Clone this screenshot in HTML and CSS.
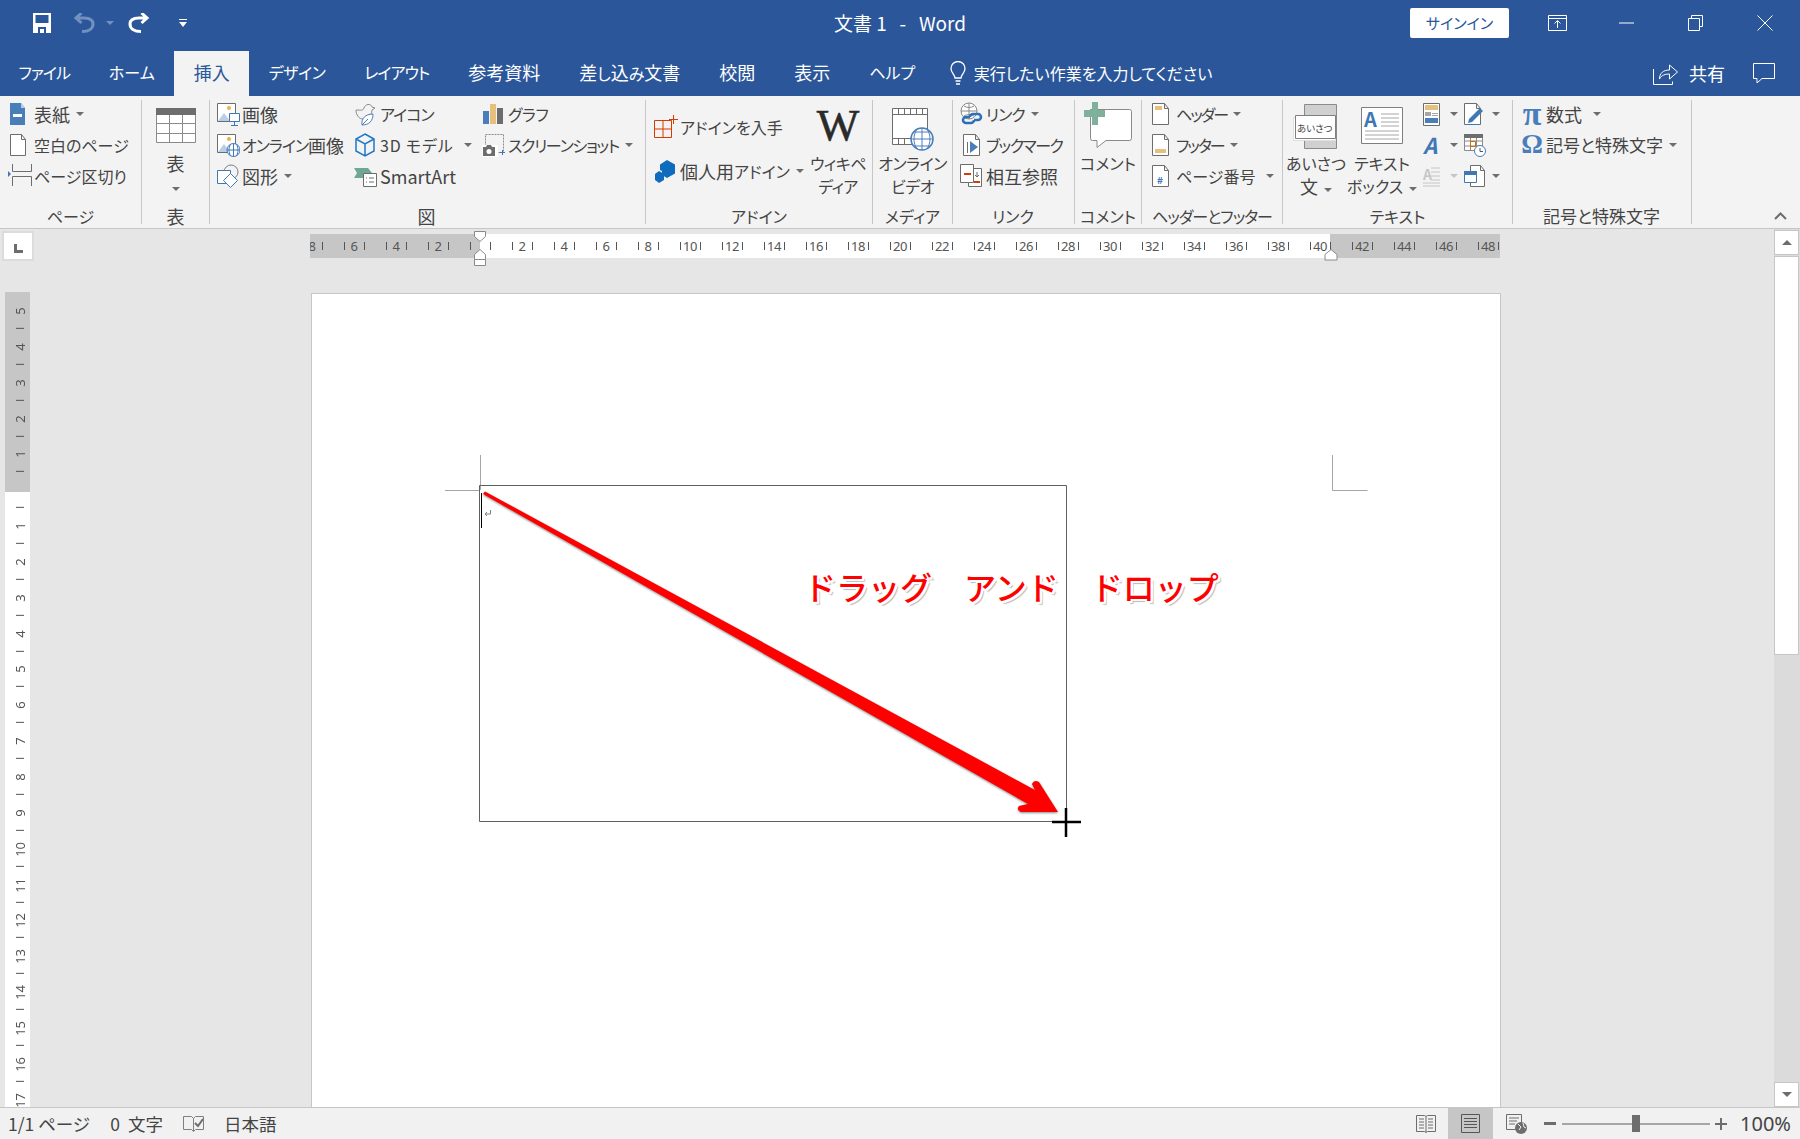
FILE: index.html
```html
<!DOCTYPE html>
<html lang="ja">
<head>
	<meta charset="UTF-8">
	<title>文書 1 - Word</title>
	<link rel="stylesheet" href="styles.css">
</head>
<body>
	<!-- title bar -->
	<header class="titlebar">
		<div class="qat">
			<svg class="q-save" width="20" height="20" viewBox="0 0 20 20"><path fill="#fff" fill-rule="evenodd" d="M1 0h18v20H1zM3.500 2v8h13V2zM6 14v6h2v-4h4v4h2v-6z"/></svg>
			<svg class="q-undo" width="22" height="20" viewBox="0 0 22 20"><path fill="none" stroke="#7390c0" stroke-width="3" d="M9 18.500c7 0 11-3 11-7.500s-4-6-9-6H3M8.500 0 3 5l5.500 5"/></svg>
			<svg class="q-caret" width="8" height="4" viewBox="0 0 8 4"><path fill="#7390c0" d="M0 0h8L4 4z"/></svg>
			<svg class="q-redo" width="22" height="20" viewBox="0 0 22 20"><path fill="none" stroke="#fff" stroke-width="3" d="M13 18.500c-7 0-11-3-11-7.500s4-6 9-6h8M13.500 0 19 5l-5.500 5"/></svg>
			<svg class="q-more" width="8" height="8" viewBox="0 0 8 8"><path fill="#fff" d="M0 0h8v1H0zM0 3h8L4 8z"/></svg>
		</div>
		<div class="doc-title">文書 1 &nbsp;&nbsp;-&nbsp;&nbsp; Word</div>
		<div class="win">
			<a class="signin">サインイン</a>
			<span class="win-btn"><svg width="20" height="16" viewBox="0 0 20 16"><path fill="none" stroke="#fff" d="M.5.500h18v15H.5zM.5 3.500h18M9.500 13V6M6.500 8.500l3-3 3 3"/></svg></span>
			<span class="win-btn"><svg width="16" height="2" viewBox="0 0 16 2"><path stroke="#fff" d="M0 1h15"/></svg></span>
			<span class="win-btn"><svg width="16" height="16" viewBox="0 0 16 16"><path fill="none" stroke="#fff" d="M.5 3.500h11v12H.5zM3.500 3.500v-3h11v11h-3"/></svg></span>
			<span class="win-btn"><svg width="16" height="16" viewBox="0 0 16 16"><path fill="none" stroke="#fff" d="M.5.500l15 15M15.500.500l-15 15"/></svg></span>
		</div>
	</header>

	<!-- tabs -->
	<nav class="tabs">
		<a class="tab tab-first">ファイル</a>
		<a class="tab">ホーム</a>
		<a class="tab on"><span class="kj">挿入</span></a>
		<a class="tab ls05">デザイン</a>
		<a class="tab ls1">レイアウト</a>
		<a class="tab"><span class="kj">参考資料</span></a>
		<a class="tab"><span class="kj">差</span>し<span class="kj">込</span>み<span class="kj">文書</span></a>
		<a class="tab"><span class="kj">校閲</span></a>
		<a class="tab"><span class="kj">表示</span></a>
		<a class="tab">ヘルプ</a>
		<div class="tell">
			<svg width="18" height="25" viewBox="0 0 18 25"><path fill="none" stroke="#fff" stroke-width="1.300" d="M6 17c0-3-4-5-4-9.500a7 7 0 0 1 14 0C16 12 12 14 12 17zM6.500 20h5M7 23h4"/></svg>
			<span>実行したい作業を入力してください</span>
		</div>
		<div class="tab-right">
			<svg width="26" height="22" viewBox="0 0 26 22"><path fill="none" stroke="#fff" d="M.5 6v15.500h19v-3M6.500 16c0-6 4-9 10-9V2l8 7-8 7v-5c-4 0-8 1-10 5z"/></svg>
			<span class="share kj">共有</span>
			<svg class="talk" width="24" height="21" viewBox="0 0 24 21"><path fill="none" stroke="#fff" d="M1.500.500h21v15H10l-5 4.500v-4.500H1.500z"/></svg>
		</div>
	</nav>

	<!-- ribbon -->
	<section class="ribbon">
		<div class="group g-page">
			<div class="col">
				<a class="btn"><svg width="24" height="24" viewBox="0 0 24 24"><path fill="#4a7ebb" d="M2 1h11l4 5v17H2z"/><path fill="#b9cfe8" d="M13 1v5h4z"/><path fill="#fff" d="M5 12h9v3H5z"/></svg><span class="kj">表紙</span><i class="caret"></i></a>
				<a class="btn"><svg width="24" height="24" viewBox="0 0 24 24"><path fill="#fff" stroke="#6d6d6d" d="M2.500 1.500h11l4 5v16h-15zM13.500 1.500v5h4"/></svg>空白のページ</a>
				<a class="btn"><svg width="24" height="24" viewBox="0 0 24 24"><path fill="none" stroke="#6d6d6d" d="M4.500 0v7.500h19V0M4.500 22v-9.500h19V22"/><path fill="#3f78b5" d="M0 7l3 3-3 3z"/></svg>ページ区切り</a>
			</div>
			<div class="g-label">ページ</div>
		</div>

		<div class="group g-table">
			<a class="big">
				<svg width="42" height="52" viewBox="0 0 42 52"><path fill="#fff" stroke="#8a8a8a" d="M1.500 8.500h39v34h-39zM1.500 23.500h39M1.500 33.500h39M14.500 15v27M27.500 15v27"/><path fill="#6d6d6d" d="M1 8h40v7H1z"/></svg>
				<span class="kj">表</span>
				<span><i class="caret flush"></i></span>
			</a>
			<div class="g-label kj">表</div>
		</div>

		<div class="group g-fig">
			<div class="cols">
				<div class="col col-fig1">
					<a class="btn"><svg width="24" height="24" viewBox="0 0 24 24"><path fill="#fff" stroke="#6d6d6d" d="M1.500 1.500h18v18h-18z"/><path fill="#b9cfe8" d="M2 19l6-8 6 8z"/><circle cx="13" cy="6" r="2" fill="#e8b04f"/><path fill="#fff" stroke="#3f78b5" d="M13.500 11.500h10v8h-10zM18.500 20v3M15 23.500h7"/></svg><span class="kj">画像</span></a>
					<a class="btn ls1"><svg width="24" height="24" viewBox="0 0 24 24"><path fill="#fff" stroke="#6d6d6d" d="M1.500 1.500h18v18h-18z"/><path fill="#b9cfe8" d="M2 19l6-8 6 8z"/><circle cx="13" cy="6" r="2" fill="#e8b04f"/><circle cx="17.500" cy="17" r="6.500" fill="#fff" stroke="#3f78b5"/><path fill="none" stroke="#3f78b5" d="M11 17h13M17.500 10.500v13M14.500 11.500c-2 3-2 8 0 11M20.500 11.500c2 3 2 8 0 11"/></svg>オンライン<span class="kj">画像</span></a>
					<a class="btn"><svg width="24" height="24" viewBox="0 0 24 24"><circle cx="15" cy="8" r="7" fill="none" stroke="#7f7f7f"/><path fill="#fff" stroke="#3f78b5" d="M1.500 6.500h13v13h-13z"/><path fill="#fff" stroke="#3f78b5" d="M14.500 9.500l7 7-7 7-7-7z"/></svg><span class="kj">図形</span><i class="caret"></i></a>
				</div>
				<div class="col col-fig2">
					<a class="btn ls1"><svg width="24" height="24" viewBox="0 0 24 24"><path fill="none" stroke="#8a8a8a" d="M2 8c5 0 7 1 8-2 1-4 7-5 8-1l3 1-3 2c0 4-2 6-4 7M2 8c0 5 3 9 7 9"/><path fill="#fff" stroke="#4a7ebb" d="M8 23c-1-6 3-11 11-11 0 7-4 11-11 11zM8 23l6-6"/></svg>アイコン</a>
					<a class="btn lsp"><svg width="24" height="24" viewBox="0 0 24 24"><path fill="none" stroke="#1f78c8" stroke-width="1.500" d="M11 1l9 5v12l-9 5-9-5V6zM2 6l9 5 9-5M11 11v12"/></svg>3D モデル<i class="caret wide"></i></a>
					<a class="btn"><svg width="24" height="24" viewBox="0 0 24 24"><path fill="#6ea792" d="M0 4h14l4 5-4 5H0l3-5z"/><path fill="#fff" stroke="#6d6d6d" d="M9.500 9.500h13v13h-13zM12 14h1M15 14h5M12 18h1M15 18h5"/></svg><span class="kj">SmartArt</span></a>
				</div>
				<div class="col col-fig3">
					<a class="btn ls05"><svg width="24" height="24" viewBox="0 0 24 24"><path fill="#4a7ebb" d="M1 9h6v13H1z"/><path fill="#e8c07d" d="M8 2h6v20H8z"/><path fill="#6d6d6d" d="M15 6h6v16h-6z"/></svg>グラフ</a>
					<a class="btn ls13"><svg width="24" height="24" viewBox="0 0 24 24"><path fill="none" stroke="#8a8a8a" stroke-dasharray="2 1" d="M3.500 1.500h18v18h-18z"/><path fill="#fff" d="M0 12h16v12H0z"/><path fill="#6d6d6d" d="M1 14h3l1-2h4l1 2h3v9H1z"/><circle cx="7" cy="18.500" r="2.500" fill="#fff"/><path fill="#3f78b5" d="M18 19h2v-2h1v2h2v1h-2v2h-1v-2h-2z"/></svg>スクリーンショット<i class="caret"></i></a>
				</div>
			</div>
			<div class="g-label kj">図</div>
		</div>

		<div class="group g-addin">
			<div class="cols">
				<div class="col col-addin">
					<a class="btn tall"><svg width="24" height="24" viewBox="0 0 24 24"><path fill="none" stroke="#d83b01" d="M.5 5.500h17v17H.5zM.5 14h17M9 5.500v17M19.500 0v9M15 4.500h9"/></svg>アドインを入手</a>
					<a class="btn tall"><svg width="24" height="24" viewBox="0 0 24 24"><path fill="#0f6cbd" d="M13 1l8 4.500v9L13 19l-5-3v-4l-2-1V5.500z"/><path fill="#0f6cbd" d="M5 12l5 3v6l-5 3-4-3v-6z"/></svg><span class="kj">個人用</span>アドイン<i class="caret"></i></a>
				</div>
				<a class="big big-w ls05">
					<span class="wiki">W</span>
					<span>ウィキペ</span>
					<span>ディア</span>
				</a>
			</div>
			<div class="g-label">アドイン</div>
		</div>

		<div class="group g-media">
			<a class="big ls05">
				<svg width="44" height="52" viewBox="0 0 44 52"><path fill="#fff" stroke="#6d6d6d" d="M1.500 8.500h35v36h-35zM1.500 14.500h35M1.500 38.500h35M7.500 8.500v6M13.500 8.500v6M19.500 8.500v6M25.500 8.500v6M31.500 8.500v6M7.500 38.500v6M13.500 38.500v6"/><circle cx="31" cy="39" r="11" fill="#fff" stroke="#4a7ebb" stroke-width="1.500"/><path fill="none" stroke="#4a7ebb" d="M20 39h22M31 28v22M23 32h16M23 46h16M26 29c-4 6-4 14 0 20M36 29c4 6 4 14 0 20"/></svg>
				<span>オンライン</span>
				<span>ビデオ</span>
			</a>
			<div class="g-label">メディア</div>
		</div>

		<div class="group g-link">
			<div class="col">
				<a class="btn ls1"><svg width="24" height="24" viewBox="0 0 24 24"><circle cx="9" cy="9" r="8" fill="#fff" stroke="#8a8a8a"/><path fill="none" stroke="#8a8a8a" d="M1 9h16M9 1v16M4 4c3 2 7 2 10 0M4 14c3-2 7-2 10 0"/><path fill="none" stroke="#2f6fb5" stroke-width="2.500" d="M10 15H6a3 3 0 0 0 0 6h5a3 3 0 0 0 3-3M14 18h4a3 3 0 0 0 0-6h-5a3 3 0 0 0-3 3"/></svg>リンク<i class="caret"></i></a>
				<a class="btn ls15"><svg width="24" height="24" viewBox="0 0 24 24"><path fill="#fff" stroke="#6d6d6d" d="M3.500 1.500h12l4 5v16h-16zM15.500 1.500v5h4"/><path fill="#6d6d6d" d="M7 9h1v11H7z"/><path fill="#4a7ebb" d="M10 8l8 6-8 6z"/></svg>ブックマーク</a>
				<a class="btn"><svg width="24" height="24" viewBox="0 0 24 24"><path fill="#fff" stroke="#6d6d6d" d="M8.500 4.500h13v18h-13z"/><path fill="#fff" stroke="#6d6d6d" d="M.5.500h13v18H.5z"/><path fill="#d83b01" d="M4 9h7v2H4zM14 17h6v2h-6z"/><path fill="none" stroke="#6d6d6d" d="M17 8v5M15 11l2 2 2-2"/></svg><span class="kj">相互参照</span></a>
			</div>
			<div class="g-label">リンク</div>
		</div>

		<div class="group g-comment">
			<a class="big">
				<svg width="48" height="52" viewBox="0 0 48 52"><path fill="#fff" stroke="#8a8a8a" d="M6.500 9.500h39a2 2 0 0 1 2 2v27a2 2 0 0 1-2 2H22l-9 7v-7H8.500a2 2 0 0 1-2-2z"/><path fill="#7fb09b" d="M8 2h6v8h7v7h-7v8H8v-8H0v-7h8z"/></svg>
				<span>コメント</span>
			</a>
			<div class="g-label">コメント</div>
		</div>

		<div class="group g-hf">
			<div class="col">
				<a class="btn ls2"><svg width="24" height="24" viewBox="0 0 24 24"><path fill="#fff" stroke="#6d6d6d" d="M2.500 1.500h12l4 5v16h-16zM14.500 1.500v5h4"/><path fill="#e8c07d" d="M5 4h7v4H5z"/></svg>ヘッダー<i class="caret"></i></a>
				<a class="btn ls2"><svg width="24" height="24" viewBox="0 0 24 24"><path fill="#fff" stroke="#6d6d6d" d="M2.500 1.500h12l4 5v16h-16zM14.500 1.500v5h4"/><path fill="#e8c07d" d="M5 16h11v4H5z"/></svg>フッター<i class="caret"></i></a>
				<a class="btn"><svg width="24" height="24" viewBox="0 0 24 24"><path fill="#fff" stroke="#6d6d6d" d="M2.500 1.500h12l4 5v16h-16zM14.500 1.500v5h4"/><text class="pg-no" x="7" y="20">#</text></svg>ページ番号<i class="caret wide"></i></a>
			</div>
			<div class="g-label ls1">ヘッダーとフッター</div>
		</div>

		<div class="group g-text">
			<div class="cols">
				<a class="big big-text">
					<svg width="46" height="52" viewBox="0 0 46 52"><path fill="#d0d0d0" stroke="#8a8a8a" d="M11.500 4.500h32v44h-32z"/><path fill="#fff" stroke="#e0e0e0" d="M.5 17.500h42v23H.5z" /><path fill="#fff" stroke="#7f7f7f" d="M2.500 15.500h40v23h-40z"/><text class="greet" x="4" y="32">あいさつ</text></svg>
					<span>あいさつ</span>
					<span><span class="kj">文</span><i class="caret"></i></span>
				</a>
				<a class="big big-text">
					<svg width="44" height="52" viewBox="0 0 44 52"><path fill="#fff" stroke="#7f7f7f" d="M1.500 7.500h41v36h-41z"/><path fill="none" stroke="#a6a6a6" d="M21 14h18M21 18h18M21 22h18M21 26h18M5 31h34M5 35h34M5 39h34"/><text class="tb-a" x="4" y="27">A</text></svg>
					<span>テキスト</span>
					<span>ボックス<i class="caret"></i></span>
				</a>
				<div class="mini">
					<a class="btn"><svg width="24" height="24" viewBox="0 0 24 24"><path fill="#fff" stroke="#6d6d6d" d="M3.500 1.500h16v22h-16z"/><path fill="#e8c07d" d="M5 3h13v5H5z"/><path fill="#a6a6a6" d="M5 10h6v4H5zM12 11h6v1h-6zM12 13h6v1h-6z"/><path fill="#4a7ebb" d="M5 16h13v5H5z"/></svg><i class="caret"></i></a>
					<a class="btn"><svg width="24" height="24" viewBox="0 0 24 24"><path fill="#fff" stroke="#6d6d6d" d="M2.500 1.500h12l4 5v16h-16zM14.500 1.500v5h4"/><path fill="#3f78b5" d="M7 17L18 6l3 3-11 11-4 1zM4 22h14v1H4z"/></svg><i class="caret"></i></a>
					<a class="btn"><svg width="24" height="24" viewBox="0 0 24 24"><text class="wa" x="3" y="21">A</text></svg><i class="caret"></i></a>
					<a class="btn"><svg width="24" height="24" viewBox="0 0 24 24"><path fill="#fff" stroke="#8a8a8a" d="M2.500 1.500h18v16h-18zM2.500 8h18M2.500 13h18M8.500 4v14M14.500 4v14"/><path fill="#6d6d6d" d="M2 1h19v4H2z"/><path fill="none" stroke="#d46a00" d="M8.500 8.500h5v5h-5z"/><circle cx="18" cy="18" r="5.500" fill="#fff" stroke="#4a7ebb"/><path fill="none" stroke="#555" d="M18 15v3.500h3"/></svg></a>
					<a class="btn"><svg width="24" height="24" viewBox="0 0 24 24"><text class="dc" x="3" y="16">A</text><path fill="none" stroke="#c6c6c6" d="M11 4h9M11 8h9M11 12h9M11 16h9M3 19h17M3 22h17"/></svg><i class="caret dim"></i></a>
					<a class="btn"><svg width="24" height="24" viewBox="0 0 24 24"><path fill="#fff" stroke="#6d6d6d" d="M8.500 1.500h10l4 5v16h-14zM18.500 1.500v5h4"/><path fill="#fff" stroke="#3f78b5" d="M2.500 7.500h12v11h-12z"/><path fill="#3f78b5" d="M2 7h13v4H2z"/></svg><i class="caret"></i></a>
				</div>
			</div>
			<div class="g-label">テキスト</div>
		</div>

		<div class="group g-sym">
			<div class="col">
				<a class="btn"><span class="math pi">π</span><span class="kj">数式</span><i class="caret wide"></i></a>
				<a class="btn"><span class="math">Ω</span><span class="kj17">記号と特殊文字</span><i class="caret"></i></a>
			</div>
			<div class="g-label kj17">記号と特殊文字</div>
		</div>

		<svg class="collapse" width="13" height="8" viewBox="0 0 13 8"><path fill="none" stroke="#6d6d6d" stroke-width="2" d="M1 7l5.500-5.500L12 7"/></svg>
	</section>

	<!-- document area -->
	<main class="work">
		<div class="doc">
			<div class="ruler-row">
				<div class="tab-stop"><i></i></div>
				<div class="hruler">
					<div class="hr-in">
						<span>8</span><span>6</span><span>4</span><span>2</span><span></span><span>2</span><span>4</span><span>6</span><span>8</span><span>10</span><span>12</span><span>14</span><span>16</span><span>18</span><span>20</span><span>22</span><span>24</span><span>26</span><span>28</span><span>30</span><span>32</span><span>34</span><span>36</span><span>38</span><span>40</span><span>42</span><span>44</span><span>46</span><span>48</span>
					</div>
					<svg class="indent-l" width="14" height="37" viewBox="0 0 14 37"><path fill="#fff" stroke="#8a8a8a" d="M1.500 1.500h11v5l-5.500 5-5.500-5zM7 19.500l5.500 5v5h-11v-5zM1.500 29.500v6h11v-6"/></svg>
					<svg class="indent-r" width="14" height="12" viewBox="0 0 14 12"><path fill="#fff" stroke="#8a8a8a" d="M7 .5l6 5v5.500H1V5.500z"/></svg>
				</div>
			</div>
			<div class="doc-row">
				<div class="vruler">
					<span>5</span><span>4</span><span>3</span><span>2</span><span>1</span><span></span><span>1</span><span>2</span><span>3</span><span>4</span><span>5</span><span>6</span><span>7</span><span>8</span><span>9</span><span>10</span><span>11</span><span>12</span><span>13</span><span>14</span><span>15</span><span>16</span><span>17</span>
				</div>
				<div class="page">
					<svg class="drawing" width="1190" height="814" viewBox="311 293 1190 814">
						<path class="mark" d="M480.500 455v35M445 490.500h35M1332.500 455v35.500h35"/>
						<path class="frame" d="M479.500 485.500h587v336h-587z"/>
						<path class="caret-line" d="M481.500 493v35"/>
						<path class="pilcrow" d="M490.500 510v4h-5M487 512l-2 2 2 2"/>
						<path class="arrow" d="M483 494l2-2.500L1035 790l-3-6q2-5 7-2l19 30h-37q-5-2-2-6l9-2z"/>
						<path class="cross" d="M1066 808v29M1052 822h29"/>
					</svg>
					<div class="shape-text">ドラッグ　アンド　ドロップ</div>
				</div>
			</div>
		</div>
		<aside class="scroll">
			<div class="sb-btn"><i class="sb-up"></i></div>
			<div class="sb-thumb"></div>
			<div class="sb-track"></div>
			<div class="sb-btn"><i class="sb-down"></i></div>
		</aside>
	</main>

	<!-- status bar -->
	<footer class="status">
		<span class="s-page">1/1 ページ</span>
		<span class="s-count">0 文字</span>
		<svg class="s-proof" width="22" height="18" viewBox="0 0 22 18"><path fill="none" stroke="#7f7f7f" d="M.5 1.500h8l2 2 2-2h8v13h-8l-2 2-2-2h-8zM10.500 3.500v13"/><path fill="none" stroke="#6d6d6d" stroke-width="2" d="M12 8l3 3 5-7"/></svg>
		<span class="s-lang">日本語</span>
		<div class="s-right">
			<svg width="20" height="20" viewBox="0 0 20 20"><path fill="none" stroke="#6d6d6d" d="M.5 1.500h8l1.500 1 1.500-1h8v16h-8l-1.500 1-1.500-1h-8zM10 2.500v16M3 5h5M3 8h5M3 11h5M3 14h5M12 5h5M12 8h5M12 11h5M12 14h5"/></svg>
			<span class="view-on"><svg width="20" height="19" viewBox="0 0 20 19"><path fill="none" stroke="#555" d="M.5.500h18v18H.5zM3 4.500h13M3 7.500h13M3 10.500h13M3 13.500h13"/></svg></span>
			<svg class="v-web" width="21" height="20" viewBox="0 0 21 20"><path fill="none" stroke="#6d6d6d" d="M.5.500h15v15H.5zM3 4h10M3 7h8M3 10h6"/><circle cx="15" cy="14" r="6" fill="#6d6d6d"/><path fill="none" stroke="#f1f1f1" d="M12 10l3 3-2 3M17 9l1 4 2 1"/></svg>
			<svg class="z-minus" width="12" height="3" viewBox="0 0 12 3"><path fill="#6d6d6d" d="M0 0h12v3H0z"/></svg>
			<div class="slider"><i></i></div>
			<svg class="z-plus" width="12" height="12" viewBox="0 0 12 12"><path fill="#6d6d6d" d="M5 0h2v5h5v2H7v5H5V7H0V5h5z"/></svg>
			<span class="zoom-val">100%</span>
		</div>
	</footer>
</body>
</html>
```

FILE: styles.css
```css
html, body {
	margin: 0;
	height: 100%;
}
body {
	display: flex;
	flex-direction: column;
	width: 1800px;
	height: 1139px;
	overflow: hidden;
	font-family: "Noto Sans CJK JP", "Noto Sans", sans-serif;
	font-size: 16px;
	font-feature-settings: "palt";
	color: #444;
	background: #e6e6e6;
}
svg {
	display: block;
	flex: none;
}
a {
	text-decoration: none;
}
i {
	font-style: normal;
}
/* the kanji of the original font run wider than its kana */
.kj {
	font-size: 18px;
	letter-spacing: 0;
}
.kj17 {
	font-size: 17px;
}
.ls05 { letter-spacing: -0.5px; }
.ls1 { letter-spacing: -1px; }
.ls13 { letter-spacing: -1.3px; }
.ls15 { letter-spacing: -1.5px; }
.ls2 { letter-spacing: -2px; }
.lsp { letter-spacing: 0.8px; }

/* title bar */
.titlebar {
	display: grid;
	grid-template-columns: 1fr auto 1fr;
	align-items: center;
	height: 51px;
	background: #2b579a;
	color: #fff;
}
.qat {
	display: flex;
	align-items: center;
	padding: 0 0 5px 32px;
}
.q-undo {
	margin-left: 21px;
}
.q-caret {
	margin-left: 11px;
}
.q-redo {
	margin-left: 14px;
}
.q-more {
	margin-left: 29px;
}
.doc-title {
	padding-bottom: 5px;
	font-size: 19px;
	font-feature-settings: normal;
	line-height: 24px;
}
.win {
	display: flex;
	align-items: center;
	justify-content: flex-end;
	padding: 0 1px 5px 0;
}
.signin {
	width: 99px;
	height: 30px;
	margin-right: 14px;
	border-radius: 2px;
	background: #fff;
	color: #2b579a;
	font-size: 15px;
	line-height: 29px;
	text-align: center;
}
.win-btn {
	display: flex;
	align-items: center;
	justify-content: center;
	width: 69px;
	height: 30px;
}

/* tabs */
.tabs {
	display: flex;
	height: 45px;
	background: #2b579a;
	color: #fff;
	line-height: 43px;
}
.tab {
	padding: 0 19.5px;
	white-space: nowrap;
}
.tab-first {
	margin-left: -1px;
	letter-spacing: -1px;
}
.tab.on {
	background: #f3f3f3;
	color: #2b579a;
}
.tell {
	display: flex;
	align-items: center;
	gap: 7px;
	margin-left: 14px;
}
.tab-right {
	display: flex;
	align-items: center;
	margin-left: auto;
	padding-right: 24px;
}
.share {
	margin: 0 27px 0 10px;
}

/* ribbon */
.ribbon {
	position: relative;
	display: flex;
	flex: none;
	box-sizing: border-box;
	height: 133px;
	padding: 4px 0;
	border-bottom: 1px solid #c6c6c6;
	background: #f3f3f3;
}
.group {
	display: flex;
	flex-direction: column;
	flex: none;
	box-sizing: border-box;
	border-right: 1px solid #c6c6c6;
	white-space: nowrap;
}
.g-page { width: 142px; padding-left: 8px; }
.g-table { width: 68px; }
.g-fig { width: 436px; padding-left: 6px; }
.g-addin { width: 227px; padding-left: 8px; }
.g-media { width: 80px; }
.g-link { width: 122px; padding-left: 7px; }
.g-comment { width: 67px; }
.g-hf { width: 141px; padding-left: 8px; }
.g-text { width: 230px; }
.g-sym { width: 179px; padding-left: 7px; }
.g-label {
	margin-top: auto;
	line-height: 16px;
	text-align: center;
}
.g-page .g-label, .g-fig .g-label, .g-addin .g-label, .g-link .g-label,
.g-hf .g-label, .g-sym .g-label {
	margin-left: -8px;
}
.cols {
	display: flex;
}
.col {
	display: flex;
	flex-direction: column;
	margin-top: -2px;
}
.col-fig1 { width: 138px; }
.col-fig2 { width: 128px; }
.col-addin { width: 160px; margin-top: 5px; }
.btn {
	display: flex;
	align-items: center;
	height: 31px;
	color: #444;
}
.btn svg {
	margin-right: 2px;
}
.btn.tall {
	height: 44px;
}
.caret {
	flex: none;
	display: inline-block;
	width: 0;
	height: 0;
	margin-left: 6px;
	border: 4px solid transparent;
	border-top-color: #6d6d6d;
	border-bottom: 0;
	vertical-align: middle;
}
.caret.wide {
	margin-left: 11px;
}
.caret.flush {
	margin-left: 0;
}
.caret.dim {
	border-top-color: #c6c6c6;
}
.big {
	display: flex;
	flex-direction: column;
	align-items: center;
	color: #444;
	line-height: 23px;
}
.big span {
	height: 23px;
}
.big-w {
	width: 48px;
}
.big-text {
	width: 66px;
}
.big .wiki {
	display: block;
	height: 52px;
	font-family: "Liberation Serif", serif;
	font-size: 45px;
	line-height: 50px;
	letter-spacing: 0;
	color: #2a2a2a;
	-webkit-text-stroke: 0.6px #2a2a2a;
}
.mini {
	display: grid;
	grid-template-columns: 42px 42px;
	align-self: flex-start;
	margin: -2px 0 0 5px;
}
.mini .caret {
	margin-left: 4px;
}
.math {
	width: 24px;
	margin-right: 2px;
	font-family: "Liberation Serif", serif;
	font-size: 27px;
	font-weight: bold;
	line-height: 31px;
	color: #4a7ebb;
	text-align: center;
}
.math.pi {
	font-size: 34px;
}
.pg-no {
	font-size: 10px;
	font-weight: bold;
	fill: #3f78b5;
}
.greet {
	font-size: 9.5px;
	fill: #444;
}
.tb-a {
	font-size: 20px;
	font-weight: bold;
	fill: #3f78b5;
}
.wa {
	font-size: 22px;
	font-weight: bold;
	font-style: italic;
	fill: #3f78b5;
}
.dc {
	font-size: 14px;
	font-weight: bold;
	fill: #c6c6c6;
}
.collapse {
	position: absolute;
	right: 13px;
	bottom: 8px;
}

/* document area */
.work {
	display: flex;
	flex: 1;
	min-height: 0;
}
.doc {
	flex: 1;
	min-width: 0;
	overflow: hidden;
}
.ruler-row {
	display: flex;
	box-sizing: border-box;
	height: 64px;
	padding-top: 5px;
}
.tab-stop {
	display: flex;
	align-items: center;
	justify-content: center;
	box-sizing: border-box;
	flex: none;
	width: 32px;
	height: 30px;
	margin: -3px 0 0 2px;
	border: 2px solid #dcdcdc;
	background: #fff;
}
.tab-stop i {
	width: 9px;
	height: 9px;
	margin-top: 4px;
	background: linear-gradient(#6d6d6d, #6d6d6d) left/3px 100% no-repeat, linear-gradient(#6d6d6d, #6d6d6d) bottom/100% 3px no-repeat;
}
.hruler {
	position: relative;
	flex: none;
	width: 1190px;
	height: 24px;
	margin-left: 276px;
}
.hr-in {
	display: flex;
	height: 100%;
	overflow: hidden;
	background: linear-gradient(to right, #c6c6c6 170px, #fff 170px, #fff 1020px, #c6c6c6 1020px);
	font-family: "Noto Sans", sans-serif;
	font-size: 13px;
	line-height: 24px;
	letter-spacing: -0.5px;
	color: #555;
}
.hr-in span {
	flex: none;
	width: 21px;
	margin: 0 10.5px;
	text-align: center;
	background: linear-gradient(#555, #555) left center/1px 8px no-repeat, linear-gradient(#555, #555) right center/1px 8px no-repeat;
}
.hr-in span:first-child {
	margin-left: -8.5px;
}
.indent-l, .indent-r {
	position: absolute;
}
.indent-l {
	left: 163px;
	top: -4px;
}
.indent-r {
	left: 1014px;
	top: 15px;
}
.doc-row {
	display: flex;
	height: 814px;
}
.vruler {
	display: flex;
	flex-direction: column;
	flex: none;
	box-sizing: border-box;
	width: 25px;
	height: 815px;
	margin: -1px 0 0 5px;
	padding-top: 1px;
	overflow: hidden;
	background: linear-gradient(#c6c6c6 200px, #fff 200px);
	font-family: "Noto Sans", sans-serif;
	font-size: 13px;
	color: #555;
}
.vruler span {
	display: flex;
	align-items: center;
	justify-content: center;
	flex: none;
	width: 30px;
	height: 35.85px;
	writing-mode: vertical-rl;
	transform: rotate(180deg);
	background: linear-gradient(#555, #555) center top/8px 1px no-repeat;
}
.page {
	position: relative;
	box-sizing: border-box;
	flex: none;
	width: 1190px;
	height: 814px;
	margin-left: 281px;
	border: 1px solid #c6c6c6;
	border-bottom: 0;
	background: #fff;
}
.drawing {
	position: absolute;
	left: -1px;
	top: -1px;
}
.mark {
	fill: none;
	stroke: #a6a6a6;
}
.frame {
	fill: none;
	stroke: #606060;
}
.caret-line {
	stroke: #000;
}
.pilcrow {
	fill: none;
	stroke: #808080;
}
.arrow {
	fill: #f00;
	filter: drop-shadow(0 1px 1px #888);
}
.cross {
	fill: none;
	stroke: #000;
	stroke-width: 2.5px;
}
.shape-text {
	position: absolute;
	left: 492px;
	top: 272px;
	font-size: 32px;
	font-feature-settings: normal;
	font-weight: 500;
	line-height: 40px;
	white-space: nowrap;
	color: #f00;
	text-shadow: -2px 0 0 #fff, 2px 0 0 #fff, 0 -2px 0 #fff, 0 2px 0 #fff, -2px -2px 0 #fff, 2px -2px 0 #fff, -2px 2px 0 #fff, 2px 2px 0 #fff, 3px 3px 1px #bbb;
}

/* scroll bar */
.scroll {
	display: flex;
	flex-direction: column;
	flex: none;
	box-sizing: border-box;
	width: 26px;
	padding: 1px 1px 0 0;
	background: #dbdbdb;
}
.sb-btn {
	display: flex;
	align-items: center;
	justify-content: center;
	flex: none;
	box-sizing: border-box;
	height: 25px;
	border: 1px solid #c6c6c6;
	background: #fff;
}
.sb-up, .sb-down {
	border: 5px solid transparent;
	border-left-width: 5.5px;
	border-right-width: 5.5px;
}
.sb-up {
	margin-bottom: 5px;
	border-bottom-color: #6d6d6d;
}
.sb-down {
	margin-top: 5px;
	border-top-color: #6d6d6d;
}
.sb-thumb {
	flex: none;
	box-sizing: border-box;
	height: 399px;
	margin-top: 1px;
	border: 1px solid #c6c6c6;
	background: #fff;
}
.sb-track {
	flex: 1;
}

/* status bar */
.status {
	display: flex;
	align-items: center;
	flex: none;
	box-sizing: border-box;
	height: 32px;
	padding-left: 8px;
	border-top: 1px solid #c6c6c6;
	background: #f1f1f1;
	font-size: 17.5px;
	font-feature-settings: normal;
	line-height: 31px;
}
.s-count {
	margin-left: 20px;
	word-spacing: 4px;
}
.s-proof {
	margin-left: 20px;
}
.s-lang {
	margin-left: 19px;
}
.s-right {
	display: flex;
	align-items: center;
	height: 100%;
	margin-left: auto;
	padding-right: 9px;
}
.view-on {
	display: flex;
	align-items: center;
	justify-content: center;
	height: 100%;
	width: 45px;
	margin-left: 12px;
	background: #c6c6c6;
}
.v-web {
	margin-left: 13px;
}
.z-minus {
	margin-left: 17px;
}
.slider {
	position: relative;
	width: 148px;
	height: 2px;
	margin-left: 6px;
	background: #a6a6a6;
}
.slider i {
	position: absolute;
	left: 70px;
	top: -8px;
	width: 8px;
	height: 17px;
	background: #6d6d6d;
}
.z-plus {
	margin-left: 5px;
}
.zoom-val {
	margin-left: 13px;
	font-family: "Noto Sans", sans-serif;
	font-size: 20px;
}
```
